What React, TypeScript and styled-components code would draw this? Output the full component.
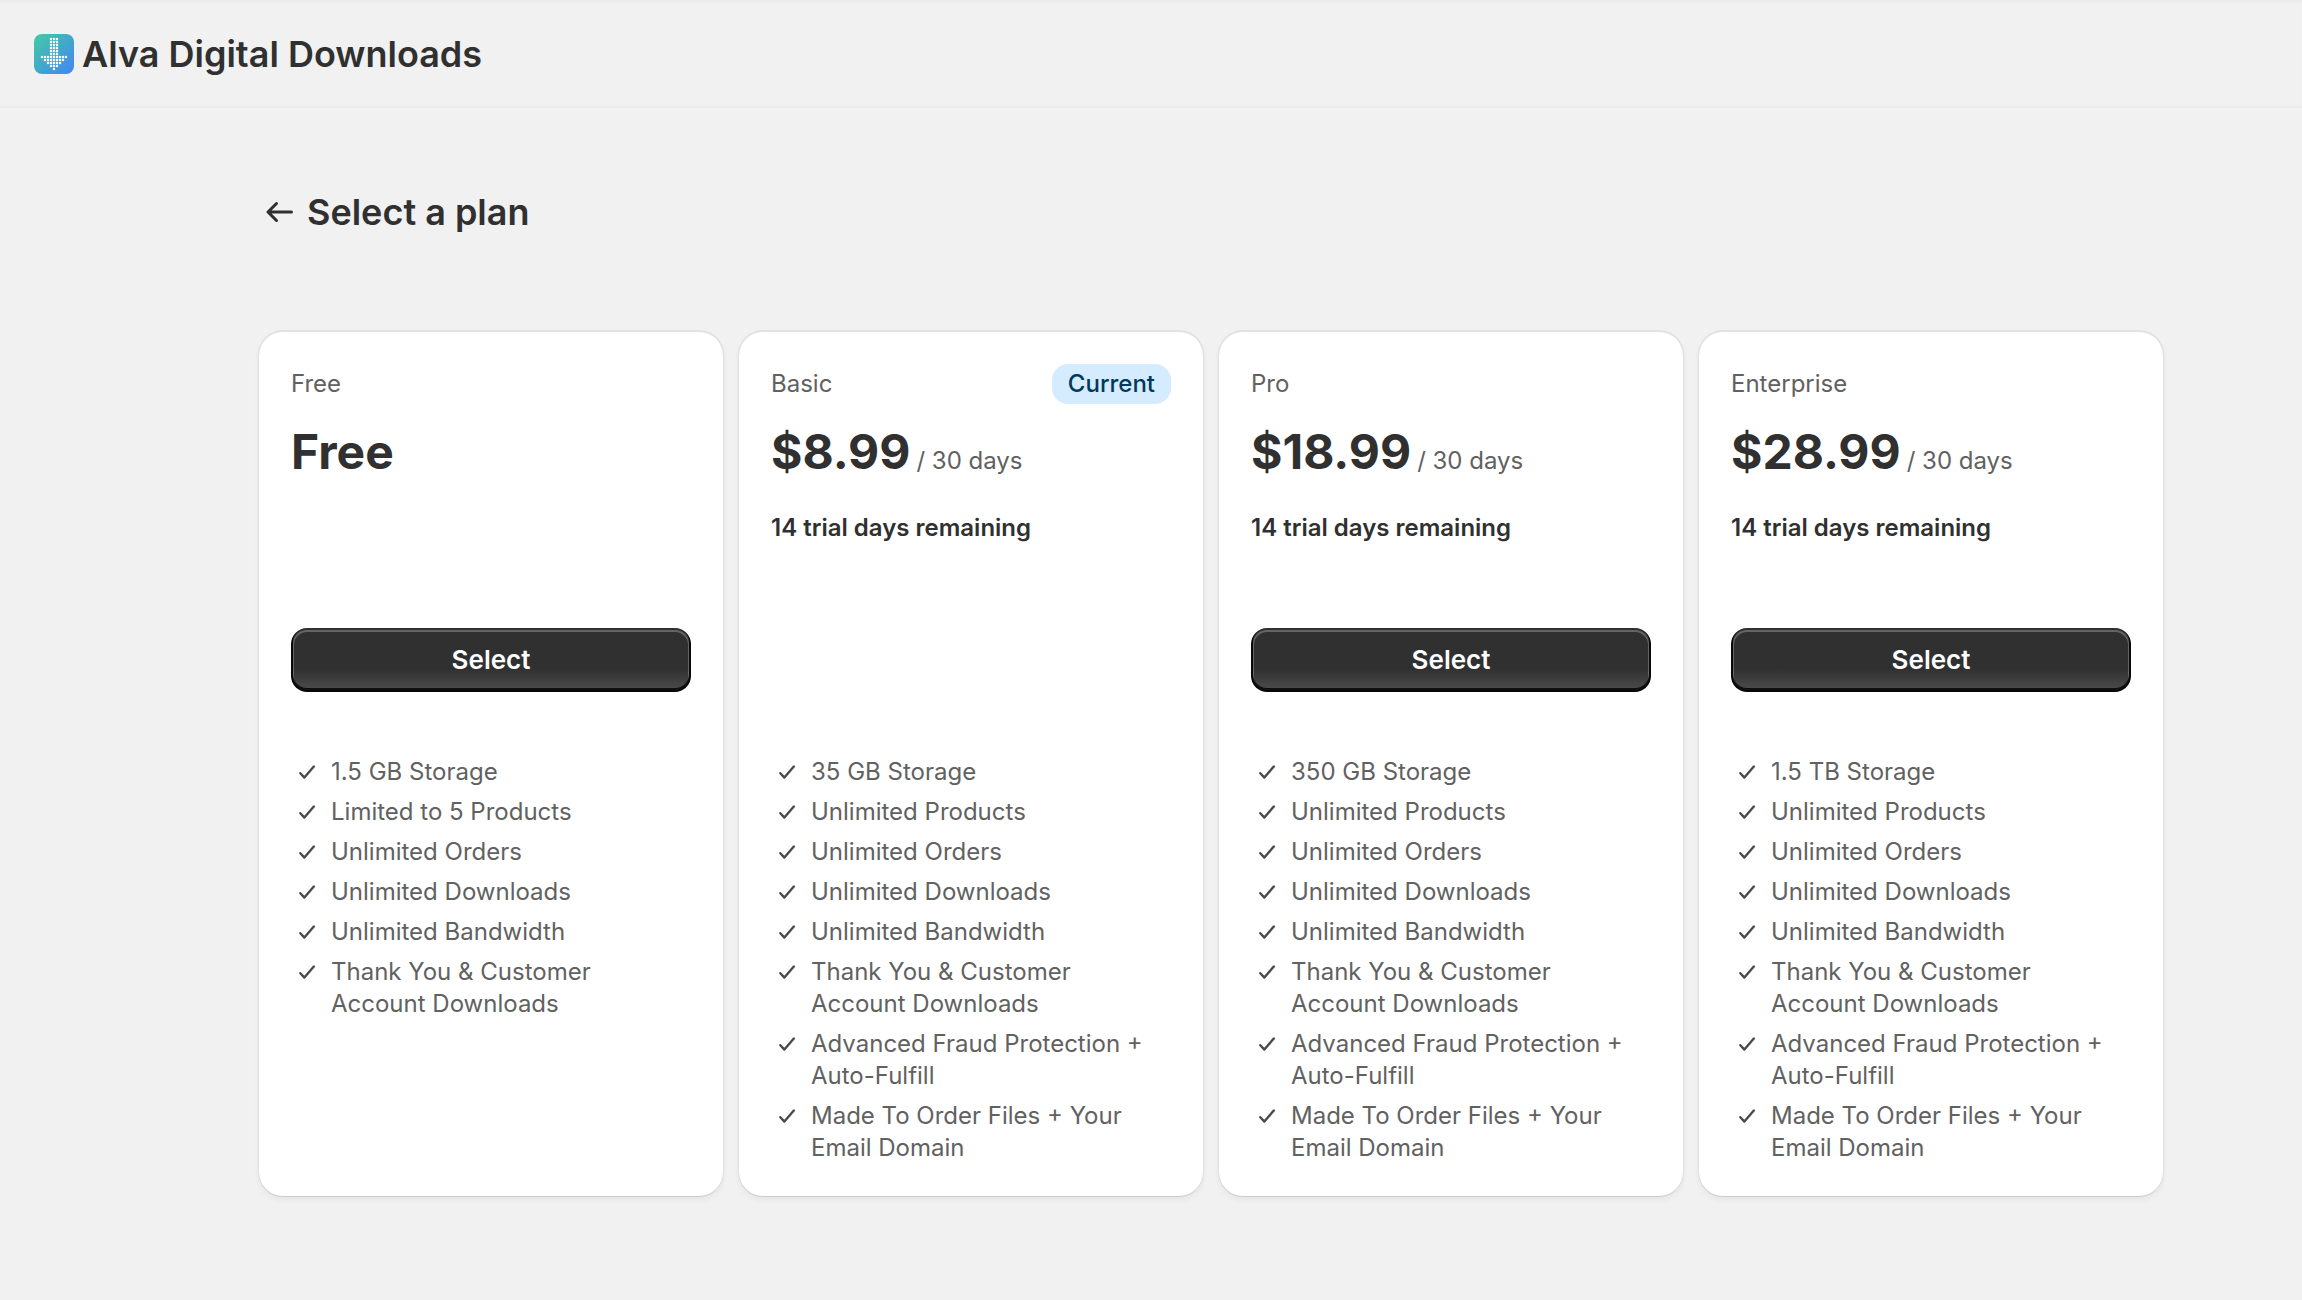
import React from 'react';
import styled, { createGlobalStyle } from 'styled-components';

const GlobalStyle = createGlobalStyle`
  *, *::before, *::after { box-sizing: border-box; }
  body {
    margin: 0;
    background: #f1f1f1;
    color: #303030;
    font-family: Inter, "Liberation Sans", sans-serif;
    font-size: 24px;
    line-height: 32px;
    font-optical-sizing: none;
    -webkit-font-smoothing: antialiased;
  }
  h1, h2, p, ul { margin: 0; padding: 0; }
`;

const Header = styled.header`
  display: flex;
  align-items: center;
  gap: 8px;
  padding: 34px 34px 32px;
  border-bottom: 2px solid #ebebeb;
  box-shadow: inset 0 4px 4px -2px rgba(0, 0, 0, 0.03);
`;

const AppName = styled.span`
  font-size: 36px;
  line-height: 40px;
  font-weight: 600;
`;

const Logo = styled.svg`
  width: 40px;
  height: 40px;
  flex: none;
`;

const Page = styled.main`
  padding: 80px 139px 100px 259px;
`;

const TitleBar = styled.div`
  display: flex;
  align-items: center;
  gap: 6px;
  padding-bottom: 96px;
`;

const BackLink = styled.a`
  display: flex;
  color: #303030;

  svg { width: 42px; height: 42px; }
`;

const PageTitle = styled.h1`
  font-size: 36px;
  line-height: 48px;
  font-weight: 600;
`;

const Plans = styled.div`
  display: grid;
  grid-template-columns: repeat(4, minmax(0, 1fr));
  gap: 16px;
`;

const Card = styled.section`
  display: flex;
  flex-direction: column;
  padding: 32px;
  border-radius: 24px;
  background: #fff;
  box-shadow: 0 1px 0 #cccccc, 0 -1px 0 1px #e2e2e2, 0 0 0 2px #e8e8e8, 0 4px 6px rgba(0, 0, 0, 0.05);
`;

const CardTop = styled.div`
  display: flex;
  align-items: center;
  justify-content: space-between;
  height: 40px;
`;

const PlanName = styled.h2`
  font-size: 24px;
  line-height: 32px;
  font-weight: 400;
  color: #616161;
`;

const Badge = styled.span`
  padding: 4px 16px;
  border-radius: 16px;
  background: #d5ebff;
  color: #003a5a;
  font-weight: 550;
`;

const PriceRow = styled.p`
  display: flex;
  align-items: baseline;
  gap: 6px;
  margin-top: 16px;
  color: #616161;
`;

const Price = styled.strong`
  font-size: 48px;
  line-height: 64px;
  font-weight: 700;
  color: #303030;
`;

const Trial = styled.p`
  height: 32px;
  margin-top: 28px;
  font-weight: 600;
`;

const Action = styled.div`
  height: 64px;
  margin: 84px 0 64px;
`;

const SelectButton = styled.button`
  display: block;
  width: 100%;
  height: 64px;
  padding: 0;
  border: 0;
  border-radius: 16px;
  background: linear-gradient(180deg, rgba(48, 48, 48, 0) 63%, rgba(255, 255, 255, 0.15) 100%), #303030;
  box-shadow: inset 0 -2px 0 2px rgba(0, 0, 0, 0.8), inset 0 0 0 2px #303030,
    inset 0 1px 0 3px rgba(255, 255, 255, 0.25);
  color: #fff;
  font: 600 26px/32px Inter, "Liberation Sans", sans-serif;
  cursor: pointer;
`;

const Features = styled.ul`
  display: flex;
  flex-direction: column;
  gap: 8px;
  list-style: none;
  color: #616161;
`;

const Feature = styled.li`
  display: flex;
  gap: 8px;

  svg { flex: none; width: 32px; height: 32px; color: #4a4a4a; }
`;

const arrowDots: Array<[number, number]> = [];
for (let row = 0; row < 11; row += 1) {
  const reach = row < 6 ? 1 : 10 - row;
  for (let col = -reach; col <= reach; col += 1) arrowDots.push([20 + col * 3, 5 + row * 3]);
}

const AppLogo = () => (
  <Logo viewBox="0 0 40 40" aria-hidden="true">
    <defs>
      <linearGradient id="logo" x1="0" y1="0" x2="1" y2="1">
        <stop offset="0" stopColor="#42cba4" />
        <stop offset="1" stopColor="#4285f4" />
      </linearGradient>
    </defs>
    <rect width="40" height="40" rx="8" fill="url(#logo)" />
    {arrowDots.map(([x, y]) => (
      <circle key={`${x}-${y}`} cx={x} cy={y} r="1.25" fill="#fff" />
    ))}
  </Logo>
);

const Check = () => (
  <svg viewBox="0 0 32 32" fill="none" stroke="currentColor" strokeWidth="2.4" strokeLinecap="round" strokeLinejoin="round" aria-hidden="true">
    <path d="M9.3 17.2 L13.4 21.6 L22.8 10.4" />
  </svg>
);

const shared = ['Unlimited Orders', 'Unlimited Downloads', 'Unlimited Bandwidth', 'Thank You & Customer Account Downloads'];
const premium = ['Unlimited Products', ...shared, 'Advanced Fraud Protection + Auto-Fulfill', 'Made To Order Files + Your Email Domain'];

interface Plan {
  name: string;
  price: string;
  paid: boolean;
  current?: boolean;
  features: string[];
}

const plans: Plan[] = [
  { name: 'Free', price: 'Free', paid: false, features: ['1.5 GB Storage', 'Limited to 5 Products', ...shared] },
  { name: 'Basic', price: '$8.99', paid: true, current: true, features: ['35 GB Storage', ...premium] },
  { name: 'Pro', price: '$18.99', paid: true, features: ['350 GB Storage', ...premium] },
  { name: 'Enterprise', price: '$28.99', paid: true, features: ['1.5 TB Storage', ...premium] },
];

const PlanCard = ({ plan }: { plan: Plan }) => (
  <Card>
    <CardTop>
      <PlanName>{plan.name}</PlanName>
      {plan.current && <Badge>Current</Badge>}
    </CardTop>
    <PriceRow>
      <Price>{plan.price}</Price>
      {plan.paid && <span>/ 30 days</span>}
    </PriceRow>
    <Trial>{plan.paid && '14 trial days remaining'}</Trial>
    <Action>{!plan.current && <SelectButton type="button">Select</SelectButton>}</Action>
    <Features>
      {plan.features.map((feature) => (
        <Feature key={feature}>
          <Check />
          <span>{feature}</span>
        </Feature>
      ))}
    </Features>
  </Card>
);

export default function App() {
  return (
    <>
      <GlobalStyle />
      <Header>
        <AppLogo />
        <AppName>Alva Digital Downloads</AppName>
      </Header>
      <Page>
        <TitleBar>
          <BackLink href="#" aria-label="Back">
            <svg viewBox="0 0 42 42" fill="none" stroke="currentColor" strokeWidth="3" strokeLinecap="round" strokeLinejoin="round" aria-hidden="true">
              <path d="M32.5 21 H9 M17.5 12.5 L9 21 L17.5 29.5" />
            </svg>
          </BackLink>
          <PageTitle>Select a plan</PageTitle>
        </TitleBar>
        <Plans>
          {plans.map((plan) => (
            <PlanCard key={plan.name} plan={plan} />
          ))}
        </Plans>
      </Page>
    </>
  );
}
